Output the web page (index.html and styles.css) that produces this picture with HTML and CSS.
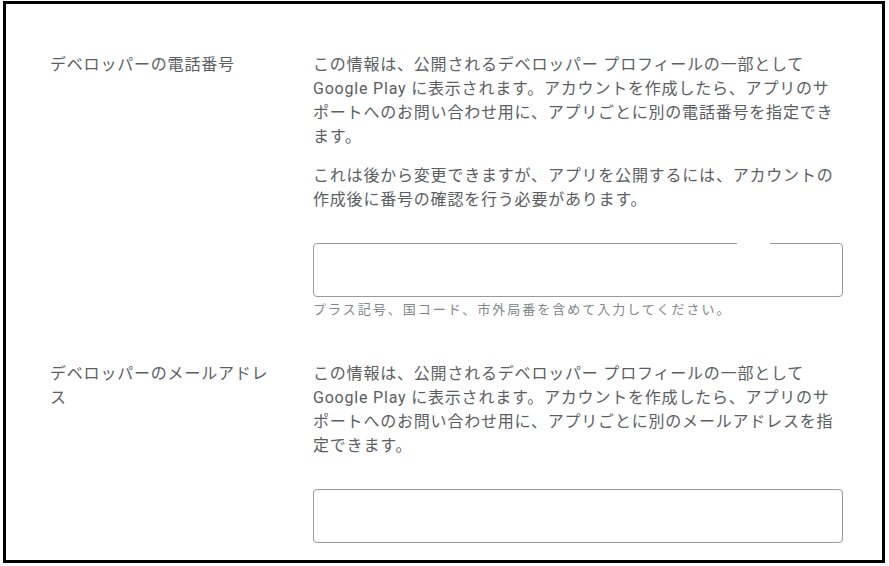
FILE: index.html
```html
<!DOCTYPE html>
<html lang="ja">
<head>
<meta charset="utf-8">
<title>デベロッパー情報</title>
<link rel="stylesheet" href="styles.css">
</head>
<body>
<div class="frame">
  <section class="row">
    <div class="label">デベロッパーの電話番号</div>
    <div class="content">
      <p class="desc">この情報は、公開されるデベロッパー プロフィールの一部として Google Play に表示されます。アカウントを作成したら、アプリのサポートへのお問い合わせ用に、アプリごとに別の電話番号を指定できます。</p>
      <p class="desc second">これは後から変更できますが、アプリを公開するには、アカウントの作成後に番号の確認を行う必要があります。</p>
      <div class="field">
        <input class="input" type="text" aria-label="デベロッパーの電話番号">
        <span class="notch"></span>
      </div>
      <p class="hint">プラス記号、国コード、市外局番を含めて入力してください。</p>
    </div>
  </section>
  <section class="row row-mail">
    <div class="label">デベロッパーのメールアドレス</div>
    <div class="content">
      <p class="desc">この情報は、公開されるデベロッパー プロフィールの一部として Google Play に表示されます。アカウントを作成したら、アプリのサポートへのお問い合わせ用に、アプリごとに別のメールアドレスを指定できます。</p>
      <div class="field">
        <input class="input" type="text" aria-label="デベロッパーのメールアドレス">
      </div>
    </div>
  </section>
</div>
</body>
</html>
```

FILE: styles.css
```css
html, body {
  margin: 0;
  padding: 0;
  background: #fff;
}

body {
  font-family: "Roboto", "Noto Sans CJK JP", sans-serif;
  color: #5f6368;
}

.frame {
  box-sizing: border-box;
  height: 562px;
  margin: 1px 4px 3px 3px;
  border: 3px solid #000;
  padding: 49px 39px 0 44px;
  overflow: hidden;
}

.row {
  display: grid;
  grid-template-columns: 225px 1fr;
  column-gap: 38px;
}

.row-mail {
  margin-top: 44px;
}

.label {
  font-size: 16px;
  line-height: 24px;
  letter-spacing: 0.8px;
  color: #5a5e63;
}

.content {
  display: flex;
  flex-direction: column;
}

.desc {
  margin: 0;
  font-size: 16px;
  line-height: 24px;
  letter-spacing: 0.8px;
  color: #5a5e63;
}

.desc.second {
  margin-top: 15px;
}

.field {
  position: relative;
  margin-top: 31px;
}

.input {
  display: block;
  box-sizing: border-box;
  width: 100%;
  height: 54px;
  margin: 0;
  padding: 0 14px;
  border: 1px solid #9a9a9a;
  border-radius: 4px;
  background: #fff;
  font: inherit;
  outline: none;
}

.notch {
  position: absolute;
  top: -1px;
  left: 424px;
  width: 33px;
  height: 3px;
  background: #fff;
}

.hint {
  margin: 5px 0 0;
  font-size: 13px;
  line-height: 16px;
  letter-spacing: 2px;
  color: #80868b;
}
```
